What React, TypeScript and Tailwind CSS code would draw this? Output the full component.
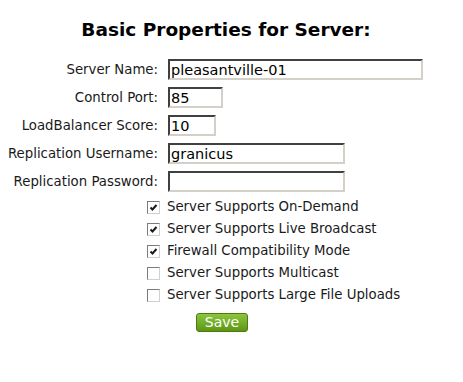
import React from 'react';

const fields = [
  { label: 'Server Name:', value: 'pleasantville-01', width: 'w-[255px]' },
  { label: 'Control Port:', value: '85', width: 'w-[55px]' },
  { label: 'LoadBalancer Score:', value: '10', width: 'w-[48px]' },
  { label: 'Replication Username:', value: 'granicus', width: 'w-[177px]' },
  { label: 'Replication Password:', value: '', width: 'w-[177px]' },
];

const options = [
  { label: 'Server Supports On-Demand', checked: true },
  { label: 'Server Supports Live Broadcast', checked: true },
  { label: 'Firewall Compatibility Mode', checked: true },
  { label: 'Server Supports Multicast', checked: false },
  { label: 'Server Supports Large File Uploads', checked: false },
];

function Box({ checked }: { checked: boolean }) {
  return (
    <span className="flex h-[13px] w-[13px] shrink-0 items-center justify-center border border-t-[#7b7b7b] border-l-[#7b7b7b] border-r-[#d4d0c8] border-b-[#d4d0c8] bg-white">
      {checked && (
        <svg width="9" height="9" viewBox="0 0 9 9">
          <path d="M1.5 4.5 L3.5 6.5 L7.5 2" stroke="#1a1a1a" strokeWidth="2" fill="none" />
        </svg>
      )}
    </span>
  );
}

export default function App() {
  return (
    <div className="min-h-[382px] w-[463px] bg-white font-['DejaVu_Sans',sans-serif] text-black">
      <h1 className="w-[452px] pt-[17px] text-center text-[18.5px] font-bold leading-[26px]">
        Basic Properties for Server:
      </h1>

      <div className="mt-[16px] grid grid-cols-[158px_auto] gap-x-[10px] gap-y-[7px]">
        {fields.map((f) => (
          <React.Fragment key={f.label}>
            <label className="self-center whitespace-nowrap text-right text-[13.3px] leading-[21px] text-[#1a1a1a]">
              {f.label}
            </label>
            <input
              type="text"
              readOnly
              value={f.value}
              className={`${f.width} h-[21px] border-2 border-t-[#404040] border-l-[#404040] border-r-[#d4d0c8] border-b-[#d4d0c8] bg-white px-[1px] pt-[1px] text-[14.5px] leading-[17px] outline-none`}
            />
          </React.Fragment>
        ))}
      </div>

      <div className="mt-[8px] flex flex-col gap-y-[8px] pl-[147px]">
        {options.map((o) => (
          <div key={o.label} className="flex h-[14px] items-center gap-x-[7px]">
            <Box checked={o.checked} />
            <span className="whitespace-nowrap text-[13.3px] leading-[14px] text-[#1a1a1a]">{o.label}</span>
          </div>
        ))}
      </div>

      <div className="mt-[8px] pl-[196px]">
        <button className="h-[19px] w-[52px] rounded-[3px] border border-[#4d7a0e] bg-gradient-to-b from-[#8cc63c] to-[#5e9614] text-[14px] leading-[15px] text-white">
          Save
        </button>
      </div>
    </div>
  );
}
